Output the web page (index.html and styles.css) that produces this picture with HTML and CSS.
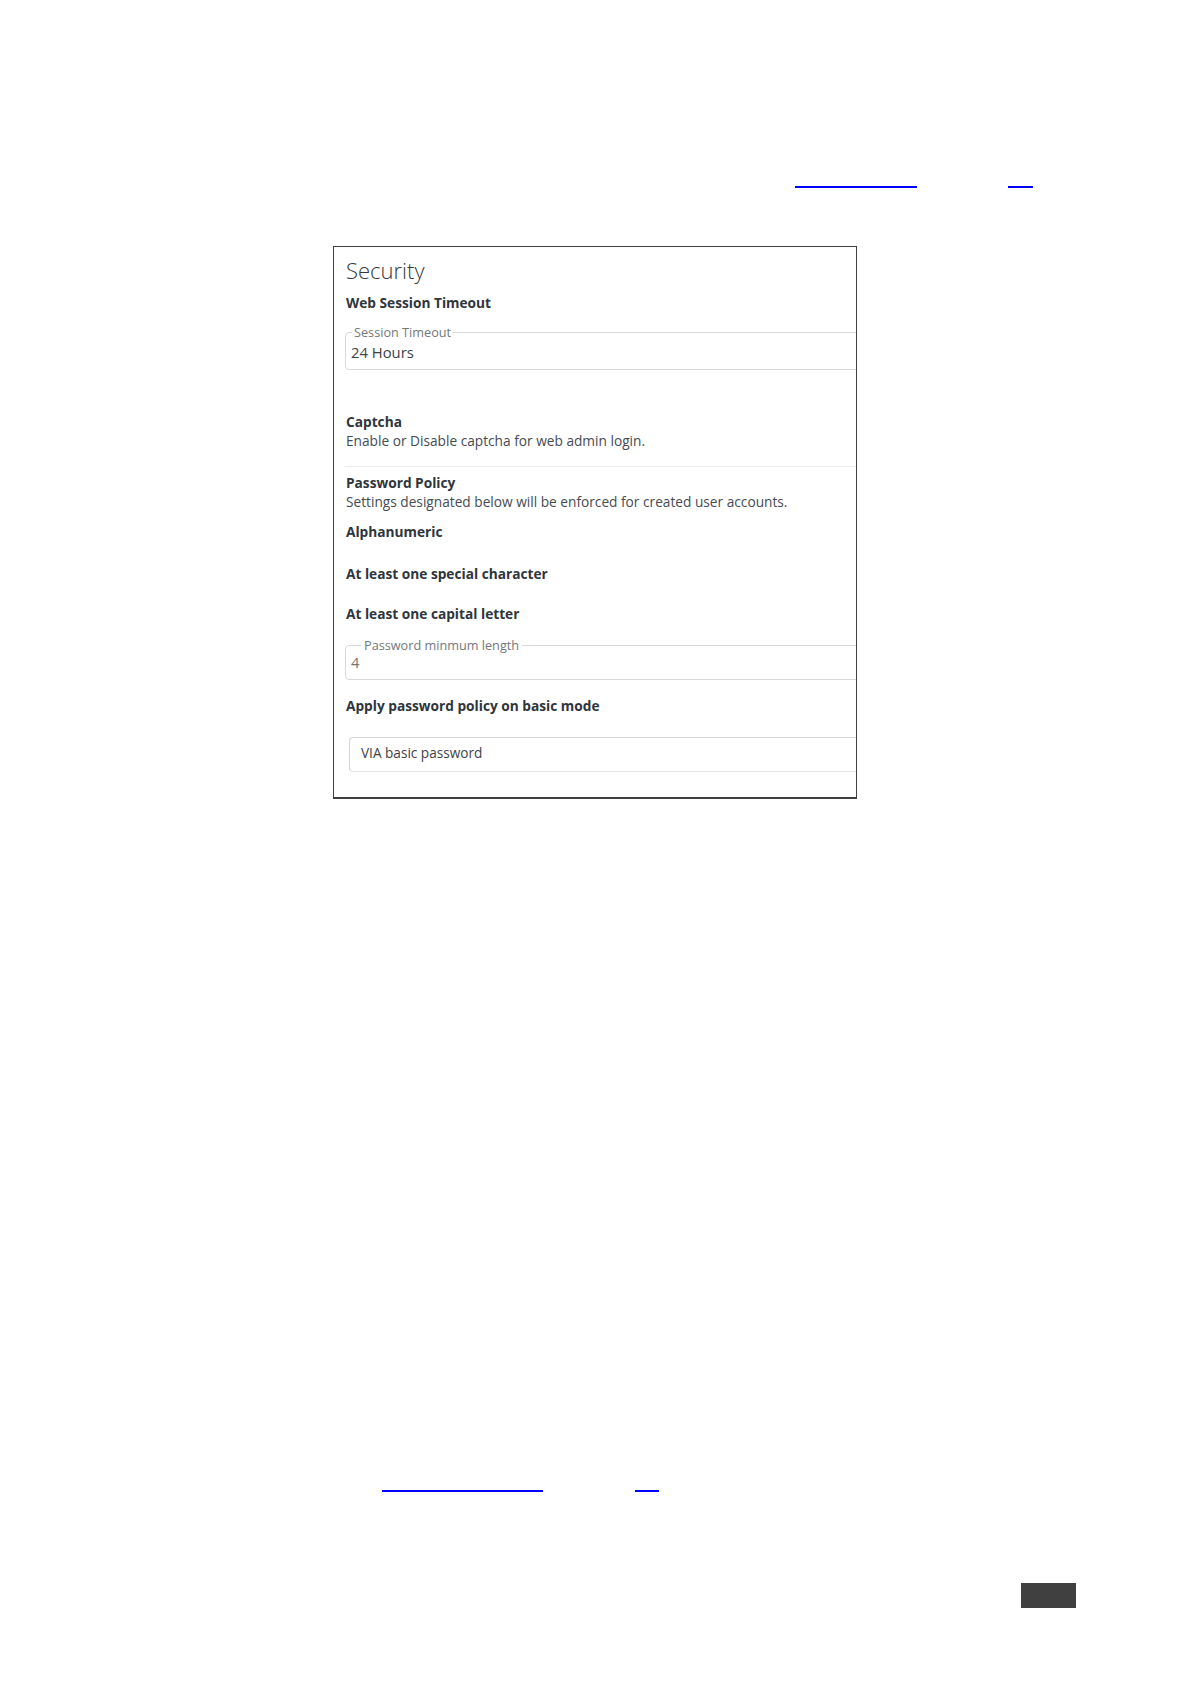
FILE: index.html
```
<!DOCTYPE html>
<html lang="en">
<head>
<meta charset="utf-8">
<title>Security</title>
<link rel="stylesheet" href="styles.css">
</head>
<body>
<div class="page">
  <div class="ref-row ref-row-top">
    <span class="ref-link ref-top-a"></span>
    <span class="ref-link ref-top-b"></span>
  </div>

  <section class="card">
    <h1 class="card-title">Security</h1>
    <div class="label label-first">Web Session Timeout</div>
    <fieldset class="field field-session">
      <legend class="field-legend">Session Timeout</legend>
      <div class="field-value">24 Hours</div>
    </fieldset>

    <div class="label label-captcha">Captcha</div>
    <div class="desc">Enable or Disable captcha for web admin login.</div>
    <hr class="divider">

    <div class="label label-policy">Password Policy</div>
    <div class="desc">Settings designated below will be enforced for created user accounts.</div>
    <div class="label label-alpha">Alphanumeric</div>
    <div class="label label-special">At least one special character</div>
    <div class="label label-capital">At least one capital letter</div>
    <fieldset class="field field-length">
      <legend class="field-legend legend-indent">Password minmum length</legend>
      <div class="field-value value-muted">4</div>
    </fieldset>
    <div class="label label-apply">Apply password policy on basic mode</div>
    <div class="input-box">VIA basic password</div>
  </section>

  <div class="ref-row ref-row-bottom">
    <span class="ref-link ref-bot-a"></span>
    <span class="ref-link ref-bot-b"></span>
  </div>

  <footer class="page-footer">
    <span class="page-number"></span>
  </footer>
</div>
</body>
</html>
```

FILE: styles.css
```
html, body {
  margin: 0;
  padding: 0;
  background: #ffffff;
}

.page {
  width: 1192px;
  height: 1685px;
  font-family: "Open Sans", "Liberation Sans", sans-serif;
}

.ref-row {
  display: flex;
  align-items: flex-start;
}

.ref-link {
  display: block;
  height: 2px;
  background: #0000ff;
}

.ref-row-top {
  padding-top: 186px;
}

.ref-top-a {
  margin-left: 795px;
  width: 122px;
}

.ref-top-b {
  margin-left: 91px;
  width: 25px;
}

.card {
  box-sizing: border-box;
  width: 524px;
  margin: 58px 0 0 333px;
  border: 1px solid #404040;
  border-bottom-width: 2px;
  padding: 11px 0 25px 11px;
  overflow: hidden;
}

.card-title {
  margin: 0;
  font-size: 22px;
  line-height: 24px;
  font-weight: 300;
  color: #33383e;
  padding-left: 1px;
}

.label {
  font-size: 13.7px;
  line-height: 19px;
  font-weight: 700;
  color: #2f353c;
  padding-left: 1px;
}

.label-first { margin-top: 11px; }
.label-captcha { margin-top: 42px; }
.label-policy { margin-top: 6px; }
.label-alpha { margin-top: 11px; }
.label-special { margin-top: 23px; }
.label-capital { margin-top: 21px; }
.label-apply { margin-top: 16px; }

.desc {
  font-size: 13.7px;
  line-height: 19px;
  color: #454b53;
  padding-left: 1px;
}

.divider {
  margin: 16px 0 0 0;
  border: 0;
  border-top: 1px solid #ececec;
  width: 600px;
}

.field {
  box-sizing: border-box;
  width: 620px;
  margin: 13px 0 0 0;
  padding: 3px 5px 7px 5px;
  border: 1px solid #d9d9d9;
  border-radius: 4px;
  min-width: 0;
}

.field-length {
  margin-top: 15px;
  padding-top: 0;
  padding-bottom: 7px;
}

.field-legend {
  font-size: 12.7px;
  line-height: 14px;
  color: #74777b;
  padding: 0 2px;
  margin-left: 1px;
}

.legend-indent {
  margin-left: 10px;
  padding: 0 3px;
}

.field-value {
  font-size: 14.8px;
  line-height: 20px;
  color: #3d4248;
}

.value-muted {
  color: #7c746c;
}

.input-box {
  box-sizing: border-box;
  width: 620px;
  margin: 22px 0 0 4px;
  padding: 5px 11px 8px 11px;
  border: 1px solid #d3d3d3;
  border-bottom-color: #e6e6e6;
  border-radius: 4px;
  font-size: 13.6px;
  line-height: 20px;
  color: #3d4248;
}

.ref-row-bottom {
  margin-top: 691px;
}

.ref-bot-a {
  margin-left: 382px;
  width: 161px;
}

.ref-bot-b {
  margin-left: 92px;
  width: 24px;
}

.page-footer {
  display: flex;
  margin-top: 91px;
}

.page-number {
  display: block;
  margin-left: 1021px;
  width: 55px;
  height: 25px;
  background: #404040;
}
```
